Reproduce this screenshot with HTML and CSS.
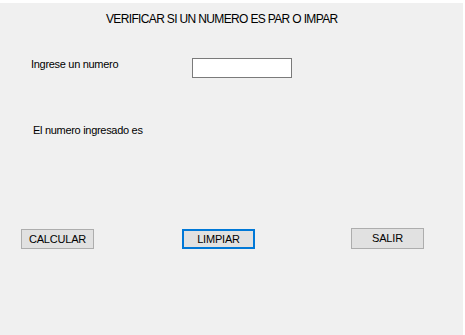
FILE: index.html
```html
<!DOCTYPE html>
<html lang="es">
<head>
<meta charset="utf-8">
<title>Verificar par o impar</title>
<link rel="stylesheet" href="styles.css">
</head>
<body>
<main class="form">
  <h1 class="title">VERIFICAR SI UN NUMERO ES PAR O IMPAR</h1>
  <div class="input-row">
    <label class="label label-input" for="numero">Ingrese un numero</label>
    <input class="textbox" id="numero" type="text">
  </div>
  <p class="label label-result">El numero ingresado es</p>
  <div class="buttons">
    <button class="btn btn-calcular" type="button">CALCULAR</button>
    <button class="btn btn-limpiar" type="button">LIMPIAR</button>
    <button class="btn btn-salir" type="button">SALIR</button>
  </div>
</main>
</body>
</html>
```
FILE: styles.css
```css
html, body {
  margin: 0;
  padding: 0;
  background: #ffffff;
}

body {
  font-family: "Liberation Sans", Arial, sans-serif;
  color: #000000;
  width: 465px;
  height: 335px;
  overflow: hidden;
}

.form {
  margin-top: 3px;
  width: 463px;
  height: 332px;
  background: #f0f0f0;
  display: flex;
  flex-direction: column;
  box-sizing: border-box;
}

.title {
  margin: 0;
  padding: 9px 0 0 106px;
  font-size: 12px;
  font-weight: normal;
  letter-spacing: -0.65px;
  line-height: 15px;
}

.input-row {
  display: flex;
  align-items: flex-start;
  margin-top: 31px;
}

.label {
  margin: 0;
  font-size: 11px;
  letter-spacing: -0.3px;
  line-height: 13px;
}

.label-input {
  margin-left: 31px;
  width: 161px;
}

.textbox {
  margin: 0;
  width: 100px;
  height: 20px;
  box-sizing: border-box;
  border: 1px solid #7a7a7a;
  background: #ffffff;
  padding: 0 2px;
  font: 11px "Liberation Sans", Arial, sans-serif;
  outline: none;
}

.label-result {
  margin-left: 33px;
  margin-top: 46px;
}

.buttons {
  display: flex;
  align-items: flex-start;
  margin-top: 91px;
}

.btn {
  width: 73px;
  height: 20px;
  box-sizing: border-box;
  background: #e1e1e1;
  border: 1px solid #adadad;
  border-radius: 0;
  padding: 0;
  font-family: "Liberation Sans", Arial, sans-serif;
  font-size: 11px;
  letter-spacing: -0.2px;
  color: #000000;
  line-height: 18px;
}

.btn-calcular {
  margin-left: 21px;
  margin-top: 1px;
}

.btn-limpiar {
  margin-left: 88px;
  margin-top: 1px;
  border: 2px solid #0078d7;
  line-height: 16px;
}

.btn-salir {
  margin-left: 96px;
  height: 21px;
  line-height: 19px;
}
```
